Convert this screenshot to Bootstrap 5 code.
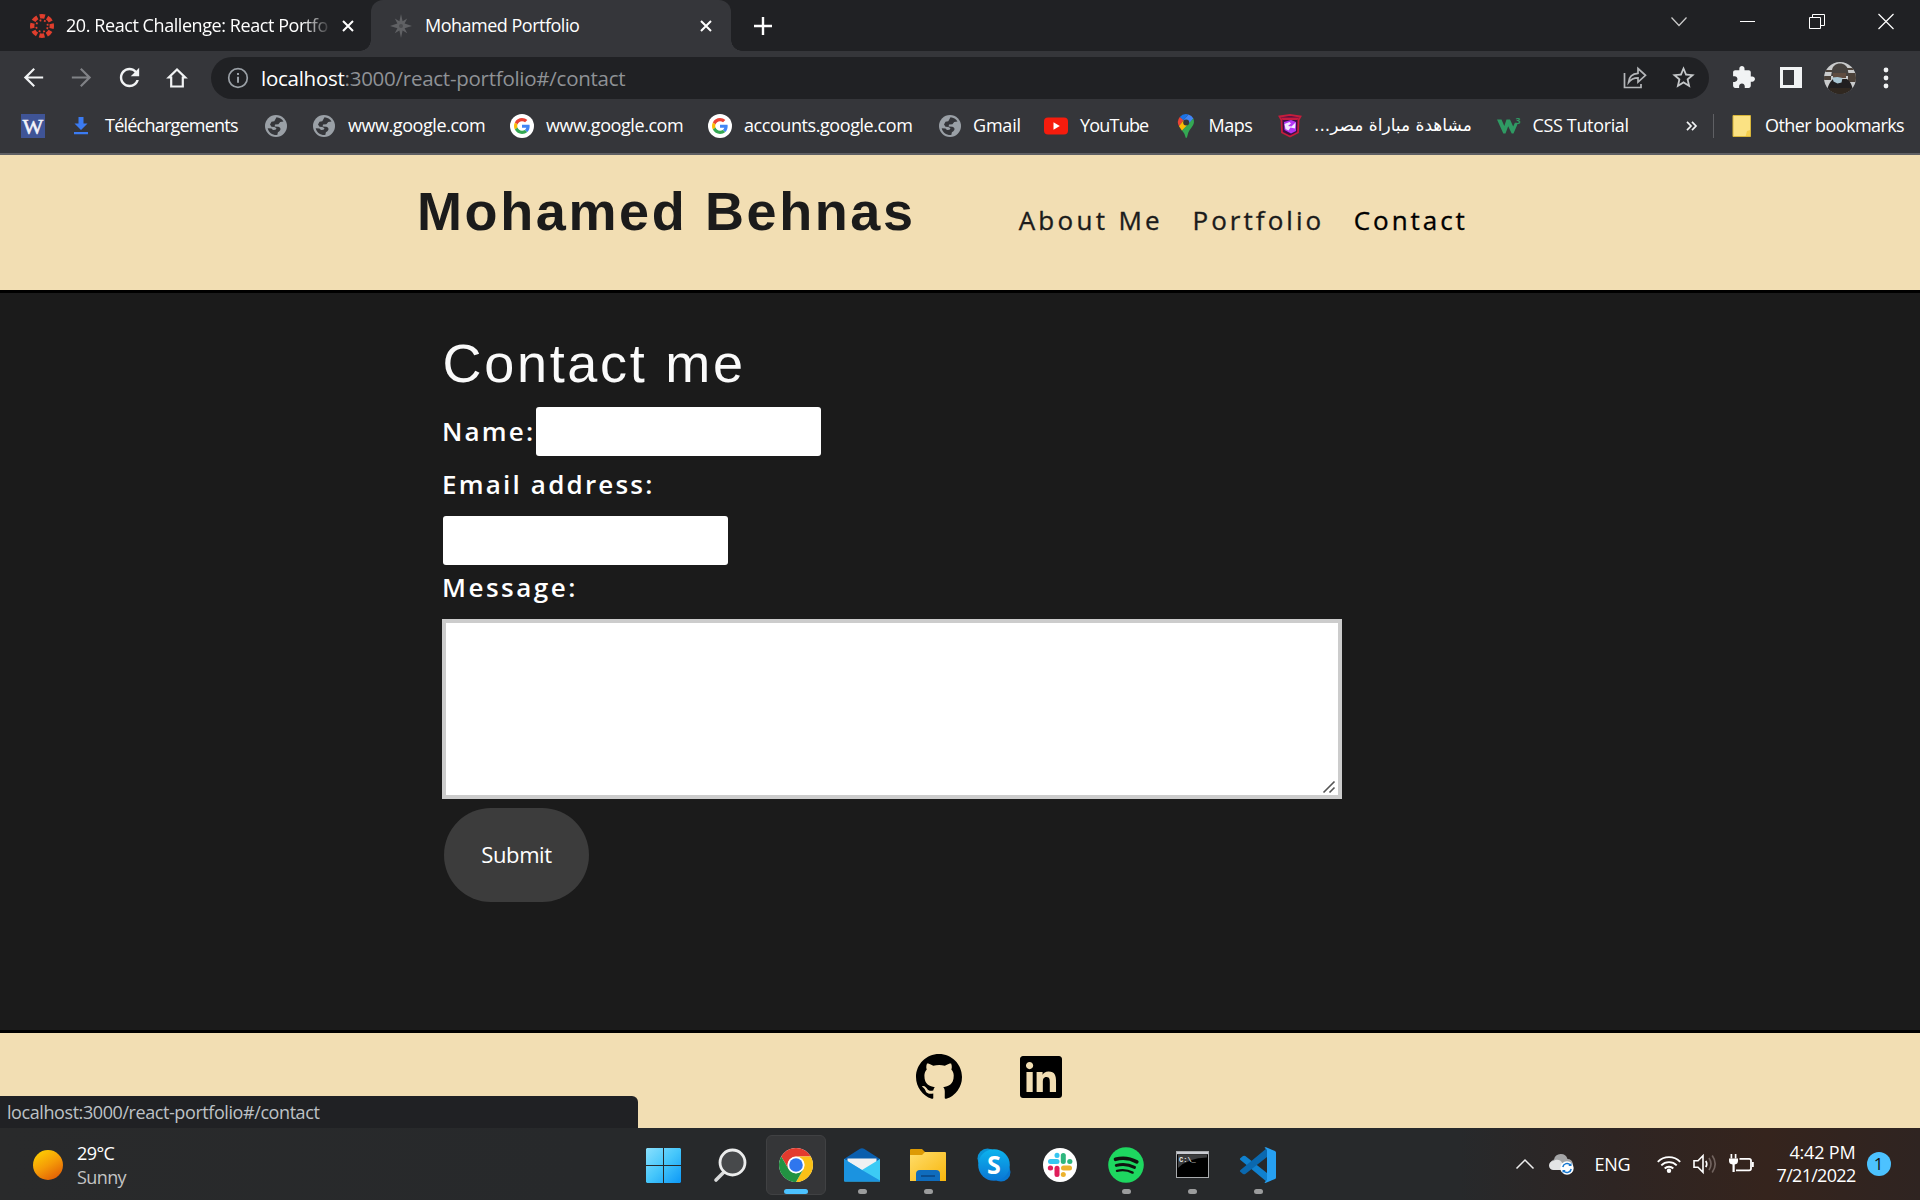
<!DOCTYPE html>
<html lang="en">
<head>
<meta charset="utf-8">
<title>Mohamed Portfolio</title>
<link href="https://cdn.jsdelivr.net/npm/bootstrap@5.3.0/dist/css/bootstrap.min.css" rel="stylesheet">
<script src="https://cdn.jsdelivr.net/npm/bootstrap@5.3.0/dist/js/bootstrap.bundle.min.js"></script>
<style>
body{font-family:"Open Sans","Noto Sans",sans-serif;font-size:18px;line-height:24px;width:1920px;height:1200px;overflow:hidden;background:#1b1b1b;color:#fff}
svg{display:block;flex:none;overflow:visible}
.slot{flex:none;display:flex;align-items:center;justify-content:center;width:48px;height:100%}
.nowrap{white-space:nowrap}
/* tab strip */
.tab-strip{height:51px;background:#202124}
.tab-idle{width:371px;padding:0 10px 0 30px}
.tab-live{width:360px;background:#35363a;border-radius:12px 12px 0 0;padding:0 12px 0 18px}
.tab-live::before,.tab-live::after{content:"";position:absolute;bottom:0;width:11px;height:11px}
.tab-live::before{left:-11px;background:radial-gradient(circle at 0 0,transparent 10.5px,#35363a 11px)}
.tab-live::after{right:-11px;background:radial-gradient(circle at 100% 0,transparent 10.5px,#35363a 11px)}
.tab-title-a{width:263px;margin-left:12px;padding-bottom:2px;letter-spacing:-.43px;overflow:hidden;-webkit-mask-image:linear-gradient(90deg,#000 236px,transparent 266px)}
.tab-title-b{margin-left:12px;padding-bottom:2px;letter-spacing:-.5px}
.tab-x{margin-right:7px}
.new-tab{width:64px}
.win-btn{width:69px;height:43px}
/* toolbar */
.tool-bar{height:53px;background:#35363a;padding-left:9px}
.omni{width:1498px;height:42px;margin:0 10px;border-radius:21px;background:#202124;padding:0 2px 0 16px;font-size:20.5px;letter-spacing:-.26px;color:#8f9296}
.omni b{font-weight:400;color:#fff;margin-left:12px}
.face{width:48px;margin-left:1px}
.dots{width:44px}
/* bookmarks */
.marks{height:51px;background:#35363a;border-bottom:2px solid #5f6064;padding:0 0 5px 21px}
.bm{display:flex;align-items:center;gap:12px;flex:none;height:100%;white-space:nowrap}
.bm span{padding-bottom:1.5px}
.bm-s{width:48px}.bm-dl{width:195px;letter-spacing:-.77px}.bm-g{width:198px;letter-spacing:-.43px}
.bm-acc{width:230px;letter-spacing:-.43px}.bm-gm{width:106px;letter-spacing:-.2px}.bm-gm span{margin-left:-1px}.bm-yt{width:129.5px;letter-spacing:-.8px}
.bm-map{width:104.5px;letter-spacing:-.45px}.bm-map span{margin-left:-1px}.bm-ar{width:218.5px}.bm-ar span{font-family:"DejaVu Sans",sans-serif;font-size:17px}
.bm-css{width:189.5px;letter-spacing:-.35px}.bm-other{letter-spacing:-.58px;margin-left:18px}
.bm-line{width:1px;height:24px;background:#5f6064;margin-left:16px}
/* page */
.site-head{height:138px;background:#f2deb3;border-bottom:3px solid #000;color:#1b1b1b;padding:23.5px 0 0 417px}
.site-title{font:700 54px/64px "Liberation Sans",Arial,sans-serif;letter-spacing:2.61px;margin:0 103px 0 0}
.site-nav{gap:29.5px;font-size:26px;letter-spacing:3.05px;-webkit-text-stroke:.35px currentColor}
.site-nav a{color:#1b1b1b;text-decoration:none}.site-nav a:first-child{letter-spacing:3.3px}.site-nav a.on{color:#000;letter-spacing:2.95px}
.site-main{height:737px;background:#1b1b1b;padding:38px 0 0 442px}
.big-h{font:400 54px/64px "Liberation Sans",Arial,sans-serif;letter-spacing:2.7px;margin:0 0 12px;padding-left:.5px;color:#fafafa}
.f-label{font-size:26px;line-height:38px;font-weight:600;letter-spacing:2.5px;margin:0;display:block}
.f-name{width:94px;padding-bottom:2px;letter-spacing:2.2px}.f-mail{letter-spacing:2.2px;margin-top:9px;margin-bottom:13px}.f-msg{margin-top:3px;margin-bottom:13px}
.f-in{display:block;width:285px;height:49px;border:0;border-radius:3px;background:#fff;padding:0 8px}
.f-mail-in{margin-left:1px}
.f-area{display:block;width:900px;height:180px;border:4px solid #ccc;border-radius:0;background:#fff;resize:none;margin:0}
.f-box{width:900px}.f-grip{right:7px;bottom:6px}
.f-send{display:block;width:145px;height:94px;border:0;border-radius:47px;background:#3c3c3c;color:#fff;font-size:22px;letter-spacing:-.38px;margin:9px 0 0 2px;padding:0 0 2px}
.site-foot{height:98px;background:#f2deb3;border-top:3px solid #000;padding:21px 0 0 916px;gap:58px}
.in-logo{margin-top:2px}
.status-tip{left:0;bottom:72px;width:638px;height:32px;background:#202124;border-radius:0 6px 0 0;color:#bdc1c6;padding:4px 0 0 7px;letter-spacing:-.42px}
/* taskbar */
.task-bar{height:72px;background:linear-gradient(90deg,#292a2b 0,#27292b 30%,#27292b 76%,#2e2523 84%,#35241d 92%,#2f2421 100%)}
.weather{width:630px;padding:2px 0 0 33px;letter-spacing:-.6px;gap:14px}
.sky{color:#c3c4c4}
.app{width:66px;height:72px;flex:none;display:flex;align-items:center;justify-content:center;position:relative;padding-top:2px}
.app-on,.app-on~.app{left:0}
.app-win{width:66.5px}
.app-on::before{content:"";position:absolute;left:3px;top:7px;width:60px;height:60px;border-radius:6px;background:#353638;border:1px solid #404143}
.app-on svg{position:relative}
.run::after,.app-on::after{content:"";position:absolute;bottom:6px;left:28.5px;width:9px;height:5px;border-radius:3px;background:#9b9c9d}
.app-on::after{left:21px;width:24px;background:#4cc2ff}
.tray{margin-left:224.500px}
.cloud{margin-left:15px}
.lang{margin-left:21px;width:62px;letter-spacing:-.28px}
.sys{margin-left:12px}
.clock{width:102px;text-align:right;line-height:23.5px}
.clock .hr-row{letter-spacing:-.18px}.clock .dt-row{letter-spacing:-.7px}
.note{width:24px;height:24px;border-radius:50%;background:#4cc2ff;color:#111;text-align:center;font-size:17px;line-height:24px;margin-left:11px}
</style>
</head>
<body class="d-flex flex-column">
<svg width="0" height="0" class="position-absolute">
<defs>
<symbol id="globe" viewBox="0 0 24 24"><circle cx="12" cy="12" r="11" fill="#9aa0a6"/><path d="M12.500 3.200c3 .3 5.500 1.800 7 4.300l-3.300.6-1.800 2.200-3.400.2-.4 2 3.600.3c2.600.5 3 3 1.200 4.400l-1.500 1-.6 2.800c-4.700.4-8.700-2.500-9.600-6.800l3.800.4 1.500 1.400 2.500-.2 1-1.600-2-1.200-3-.2-1.500-2.300L7.500 7.800l2.800-.6z" fill="#35363a"/></symbol>
<symbol id="goog" viewBox="-12 -12 72 72"><circle cx="24" cy="24" r="36" fill="#fff"/><path fill="#ea4335" d="M24 9.500c3.540 0 6.710 1.220 9.210 3.600l6.850-6.850C35.900 2.380 30.470 0 24 0 14.620 0 6.510 5.380 2.560 13.220l7.980 6.190C12.430 13.720 17.740 9.500 24 9.500z"/><path fill="#4285f4" d="M46.980 24.550c0-1.570-.15-3.090-.38-4.550H24v9.020h12.940c-.58 2.960-2.260 5.480-4.780 7.180l7.730 6c4.510-4.180 7.090-10.360 7.090-17.650z"/><path fill="#fbbc05" d="M10.530 28.590c-.48-1.450-.76-2.990-.76-4.590s.27-3.140.76-4.590l-7.980-6.190C.92 16.460 0 20.120 0 24c0 3.880.92 7.540 2.560 10.780l7.970-6.190z"/><path fill="#34a853" d="M24 48c6.480 0 11.930-2.130 15.890-5.810l-7.730-6c-2.150 1.450-4.920 2.300-8.160 2.300-6.260 0-11.570-4.220-13.470-9.910l-7.980 6.190C6.510 42.620 14.620 48 24 48z"/></symbol>
<symbol id="shut" viewBox="0 0 12 12"><path d="M1 1l10 10M11 1L1 11" stroke="#fff" stroke-width="2" fill="none"/></symbol>
</defs>
</svg>

<div class="tab-strip d-flex align-items-stretch">
  <div class="tab-idle d-flex align-items-center">
    <svg width="24" height="24" viewBox="0 0 24 24"><g fill="none" stroke="#e03e2d"><circle cx="12" cy="12" r="9.800" stroke-width="4.400" stroke-dasharray="5.200 2.497" stroke-dashoffset="2.600"/><circle cx="12" cy="12" r="5.800" stroke-width="1.800" stroke-dasharray="1.800 2.755" stroke-dashoffset="3.200"/></g></svg>
    <span class="tab-title-a nowrap">20. React Challenge: React Portfolio</span>
    <svg class="tab-x ms-auto" width="12" height="12"><use href="#shut"/></svg>
  </div>
  <div class="tab-live position-relative d-flex align-items-center">
    <svg width="24" height="24" viewBox="0 0 24 24"><path d="M12 0l1.600 7.200 4.600-2.600-2.600 4.900L23 12l-7.400 2.300 2.600 5-4.600-2.800L12 24l-1.600-7.500-4.600 2.800 2.600-5L1 12l7.400-2.500-2.600-4.900 4.600 2.600z" fill="#606164"/><circle cx="12" cy="12" r="2" fill="#4a4b4e"/></svg>
    <span class="tab-title-b nowrap">Mohamed Portfolio</span>
    <svg class="tab-x ms-auto" width="12" height="12"><use href="#shut"/></svg>
  </div>
  <div class="slot new-tab"><svg width="18" height="18" viewBox="0 0 18 18"><path d="M9 0v18M0 9h18" stroke="#fff" stroke-width="2.400"/></svg></div>
  <div class="d-flex ms-auto align-items-start">
    <div class="slot win-btn"><svg width="16" height="9" viewBox="0 0 16 9"><path d="M.5.500L8 8.500 15.500.5" stroke="#ccc" stroke-width="1.200" fill="none"/></svg></div>
    <div class="slot win-btn"><svg width="15" height="1"><rect width="15" height="1" fill="#fff"/></svg></div>
    <div class="slot win-btn"><svg width="16" height="15" viewBox="0 0 16 15"><path d="M.5 3.500h11v11H.5zM3.500 3.500v-3h12v11h-3.500" stroke="#fff" fill="none"/></svg></div>
    <div class="slot win-btn"><svg width="16" height="15" viewBox="0 0 16 15"><path d="M.5 0l15 15M15.500 0l-15 15" stroke="#fff" stroke-width="1.200"/></svg></div>
  </div>
</div>

<div class="tool-bar d-flex align-items-center">
  <div class="slot"><svg width="29" height="29" viewBox="0 0 24 24"><path fill="#f1f3f4" d="M20 11.100H7.500l5.700-5.700L12 4.200l-8 7.800 8 7.800 1.200-1.200-5.700-5.700H20z"/></svg></div>
  <div class="slot"><svg width="29" height="29" viewBox="0 0 24 24"><path fill="#808286" d="M4 11.100h12.500l-5.700-5.700L12 4.200l8 7.800-8 7.800-1.200-1.200 5.700-5.700H4z"/></svg></div>
  <div class="slot"><svg width="29" height="29" viewBox="0 0 24 24"><path fill="#f1f3f4" d="M17.650 6.350C16.200 4.900 14.210 4 12 4c-4.420 0-7.990 3.580-7.990 8s3.570 8 7.990 8c3.730 0 6.840-2.550 7.730-6h-2.080c-.82 2.330-3.040 4-5.650 4-3.310 0-6-2.690-6-6s2.690-6 6-6c1.660 0 3.140.69 4.220 1.780L13 11h7V4l-2.350 2.350z"/></svg></div>
  <div class="slot"><svg width="20" height="20" viewBox="0 0 20 20"><path d="M4.200 18.500V9.500H1.800L10 1.500l8.200 8h-2.400v9z" fill="none" stroke="#f1f3f4" stroke-width="2.200"/></svg></div>
  <div class="omni d-flex align-items-center">
    <svg width="22" height="22" viewBox="0 0 22 22"><circle cx="11" cy="11" r="9.300" fill="none" stroke="#9aa0a6" stroke-width="1.700"/><path d="M11 9.800v6M11 6v2" stroke="#9aa0a6" stroke-width="2"/></svg>
    <span class="nowrap"><b>localhost</b>:3000/react-portfolio#/contact</span>
    <div class="slot ms-auto"><svg width="24" height="24" viewBox="0 0 24 24" fill="none" stroke="#b4b6b9" stroke-width="1.700"><path d="M1.500 7v14.500H18V18"/><path d="M5.500 16.500c.5-5.500 3.500-9 9.500-9.200V2.500l7.500 6.800-7.500 6.800V11.800c-4 0-7 1.200-9.500 4.700z"/></svg></div>
    <div class="slot"><svg width="27" height="27" viewBox="0 0 24 24"><path fill="#c4c7c9" d="M22 9.240l-7.190-.62L12 2 9.190 8.630 2 9.240l5.460 4.730L5.820 21 12 17.270 18.180 21l-1.630-7.030L22 9.240zM12 15.400l-3.760 2.270 1-4.280-3.320-2.880 4.380-.38L12 6.100l1.710 4.040 4.380.38-3.320 2.880 1 4.280L12 15.400z"/></svg></div>
  </div>
  <div class="slot"><svg width="25" height="25" viewBox="0 0 24 24"><path fill="#f1f3f4" d="M20.500 11H19V7c0-1.100-.9-2-2-2h-4V3.500C13 2.120 11.880 1 10.500 1S8 2.120 8 3.500V5H4c-1.100 0-1.990.9-1.990 2v3.800H3.500c1.490 0 2.700 1.210 2.700 2.700s-1.210 2.700-2.700 2.700H2V20c0 1.100.9 2 2 2h3.800v-1.500c0-1.490 1.210-2.700 2.700-2.700 1.490 0 2.700 1.210 2.700 2.700V22H17c1.100 0 2-.9 2-2v-4h1.500c1.380 0 2.500-1.120 2.500-2.500S21.880 11 20.500 11z"/></svg></div>
  <div class="slot"><svg width="22" height="21" viewBox="0 0 22 21"><path fill="#f1f3f4" fill-rule="evenodd" d="M0 0h22v21H0zM3 3v15h11V3z"/></svg></div>
  <div class="slot face"><svg width="32" height="32" viewBox="0 0 32 32"><clipPath id="fc"><circle cx="16" cy="16" r="16"/></clipPath><g clip-path="url(#fc)"><path fill="#c9cbcc" d="M0 0h32v32H0z"/><path fill="#4b4139" d="M0 8h9v2H0zM22 6h10v2H22zM24 11h8v9h-8zM0 14h7v4H0z"/><path fill="#46423f" d="M8 9c0-10 16-10 16 0l1 5H7z"/><path fill="#5f4c40" d="M9 11h13v5H9z"/><path fill="#211f20" d="M3 32c0-8 3-12 6-15h14c4 3 6 8 6 15z"/><path fill="#a9c6d3" d="M8.500 15.500l5-.5 5 1-1 4.500-4 1-4-2z"/><path fill="#302820" d="M6 26h20v6H6z"/></g></svg></div>
  <div class="slot dots"><svg width="6" height="26" viewBox="0 0 6 26" fill="#f1f3f4"><circle cx="3" cy="5" r="2.400"/><circle cx="3" cy="13" r="2.400"/><circle cx="3" cy="21" r="2.400"/></svg></div>
</div>

<div class="marks d-flex align-items-center">
  <div class="bm bm-s"><svg width="24" height="24" viewBox="0 0 24 24"><path fill="#3f5496" d="M0 0h24v24H0z"/><text x="12" y="19.500" text-anchor="middle" font-family="Liberation Serif,serif" font-size="22" fill="#f3f4fa" stroke="#f3f4fa" stroke-width=".5">W</text></svg></div>
  <div class="bm bm-dl"><svg width="24" height="24" viewBox="0 0 24 24"><path fill="#3b7bf2" d="M9.500 3h5v6.500h4L12 16 5.500 9.500h4zM5 18h14v2.200H5z"/></svg><span>Téléchargements</span></div>
  <div class="bm bm-s"><svg width="24" height="24"><use href="#globe"/></svg></div>
  <div class="bm bm-g"><svg width="24" height="24"><use href="#globe"/></svg><span>www.google.com</span></div>
  <div class="bm bm-g"><svg width="24" height="24"><use href="#goog"/></svg><span>www.google.com</span></div>
  <div class="bm bm-acc"><svg width="24" height="24"><use href="#goog"/></svg><span>accounts.google.com</span></div>
  <div class="bm bm-gm"><svg width="24" height="24"><use href="#globe"/></svg><span>Gmail</span></div>
  <div class="bm bm-yt"><svg width="24" height="24" viewBox="0 0 24 24"><rect y="3.500" width="24" height="17" rx="4" fill="#f61c0d"/><path d="M9.500 8.300v7.400l6.300-3.700z" fill="#fff"/></svg><span>YouTube</span></div>
  <div class="bm bm-map"><svg width="24" height="24" viewBox="0 0 24 24"><path d="M5.800 3A8.300 8.300 0 0 1 14.500.500L9 6.500z" fill="#1a73e8"/><path d="M14.500.400A8.300 8.300 0 0 1 19.400 4.600L14.500 10.500 9.200 6.400z" fill="#4285f4"/><path d="M5.800 3L9.400 6.200 5.200 12.500A8.300 8.300 0 0 1 5.800 3z" fill="#ea4335"/><path d="M14.900 10.300L8 16.800 5 12.200l4.400-5.800z" fill="#fbbc04"/><path d="M19.400 4.500c2.200 6.500-2.400 8.500-4.800 13.500-.9 2-1.300 6-2.300 6s-1.200-3.600-2.600-5.300L8 16.500z" fill="#34a853"/><circle cx="12.200" cy="8.500" r="3" fill="#35363a"/></svg><span>Maps</span></div>
  <div class="bm bm-ar"><svg width="24" height="24" viewBox="0 0 24 24"><path d="M1.500 2.500L12 1l10.500 1.500L20.500 6l-.5 12.500-8 4-8-4L3.500 6z" fill="#3a1045" stroke="#c51d3c" stroke-width="1.800"/><path d="M3 3.500h18l-1.500 2.500h-15z" fill="#c61b3f"/><path d="M6 8l7-2 5 2v9l-5 2.500L6.500 16z" fill="#b436f5"/><path d="M6.500 10l5-2 1.500 1.500-3 2.500 3.500.5 4-4-.5 6-4.500-1-2 3-3-1.500z" fill="#f3e9ff"/></svg><span dir="rtl">مشاهدة مباراة مصر...</span></div>
  <div class="bm bm-css"><svg width="24" height="24" viewBox="0 0 24 24"><path d="M0 5.500h4.500l2.800 6.500 2.200-6.500H13l3.200 7L18 8.500l2.500 1.800L16.500 19.500h-1.800L11.200 12.300 8.500 19.500H6.300z" fill="#2f9a63"/><text x="18.500" y="10" font-family="Open Sans,sans-serif" font-weight="700" font-size="9" fill="#2f9a63">3</text></svg><span>CSS Tutorial</span></div>
  <svg width="11" height="10" viewBox="0 0 11 10"><path d="M1 .8L5 5 1 9.200M6 .8L10 5 6 9.200" stroke="#f1f3f4" stroke-width="1.700" fill="none"/></svg>
  <div class="bm-line"></div>
  <div class="bm bm-other"><svg width="21" height="22" viewBox="0 0 21 22"><path d="M1 1h17v15.500l-3.500 4.500H1z" fill="#fbe283"/><path d="M18.500 15v6.500h-5l1.500-5.500z" fill="#f5cf4e"/><path d="M1 .5h17.500v15.500M1 .5v21h17.500v-6" fill="none" stroke="#d8b63a"/></svg><span>Other bookmarks</span></div>
</div>

<header class="site-head d-flex align-items-baseline">
  <h1 class="site-title nowrap">Mohamed Behnas</h1>
  <nav class="site-nav d-flex nowrap"><a href="#about">About Me</a><a href="#portfolio">Portfolio</a><a href="#contact" class="on">Contact</a></nav>
</header>

<main class="site-main">
  <h2 class="big-h">Contact me</h2>
  <form>
    <div class="d-flex align-items-center"><label class="f-label f-name" for="n">Name:</label><input class="f-in" id="n" type="text"></div>
    <label class="f-label f-mail" for="e">Email address:</label>
    <input class="f-in f-mail-in" id="e" type="email">
    <label class="f-label f-msg" for="m">Message:</label>
    <div class="f-box position-relative"><textarea class="f-area" id="m"></textarea><svg class="f-grip position-absolute" width="12" height="12" viewBox="0 0 12 12"><path d="M.5 11.500l11-11M6.500 11.500l5-5" stroke="#555" stroke-width="1.600"/></svg></div>
    <button class="f-send" type="button">Submit</button>
  </form>
</main>

<footer class="site-foot d-flex align-items-start">
  <svg width="46" height="46" viewBox="0 0 16 16"><path d="M8 0C3.580 0 0 3.580 0 8c0 3.540 2.290 6.530 5.470 7.590.4.07.55-.17.55-.38 0-.19-.01-.82-.01-1.490-2.010.37-2.530-.49-2.690-.94-.09-.23-.48-.94-.82-1.130-.28-.15-.68-.52-.01-.53.63-.01 1.080.58 1.230.82.72 1.210 1.870.87 2.330.66.07-.52.28-.87.51-1.070-1.780-.2-3.640-.89-3.640-3.950 0-.87.31-1.590.82-2.150-.08-.2-.36-1.020.08-2.120 0 0 .67-.21 2.200.82.64-.18 1.320-.27 2-.27.68 0 1.360.09 2 .27 1.530-1.040 2.200-.82 2.200-.82.44 1.100.16 1.920.08 2.120.51.56.82 1.270.82 2.150 0 3.070-1.870 3.750-3.650 3.950.29.25.54.73.54 1.480 0 1.070-.01 1.930-.01 2.200 0 .21.15.46.55.38A8.012 8.012 0 0 0 16 8c0-4.420-3.580-8-8-8z"/></svg>
  <svg class="in-logo" width="42" height="42" viewBox="0 32 448 448"><path d="M416 32H31.900C14.300 32 0 46.500 0 64.300v383.400C0 465.500 14.300 480 31.900 480H416c17.600 0 32-14.500 32-32.300V64.300c0-17.800-14.400-32.300-32-32.300zM135.400 416H69V202.200h66.500V416zm-33.200-243c-21.300 0-38.500-17.300-38.500-38.500S80.900 96 102.200 96c21.200 0 38.500 17.300 38.500 38.500 0 21.300-17.200 38.500-38.500 38.500zm282.100 243h-66.400V312c0-24.800-.5-56.700-34.500-56.700-34.600 0-39.900 27-39.900 54.900V416h-66.400V202.200h63.700v29.200h.9c8.900-16.800 30.600-34.500 62.900-34.500 67.200 0 79.700 44.300 79.700 101.900V416z"/></svg>
</footer>

<div class="status-tip position-absolute nowrap">localhost:3000/react-portfolio#/contact</div>

<div class="task-bar d-flex align-items-stretch">
  <div class="weather d-flex align-items-center">
    <svg width="30" height="30" viewBox="0 0 30 30"><linearGradient id="sun" x1=".2" y1="0" x2=".8" y2="1"><stop offset="0" stop-color="#fdcf02"/><stop offset=".5" stop-color="#f59b07"/><stop offset="1" stop-color="#e05a05"/></linearGradient><circle cx="15" cy="15" r="15" fill="url(#sun)"/></svg>
    <div><div>29°C</div><div class="sky">Sunny</div></div>
  </div>
  <div class="app app-win"><svg width="35" height="35" viewBox="0 0 35 35"><linearGradient id="wn" x1="0" y1="0" x2="1" y2="1"><stop offset="0" stop-color="#8ae0fd"/><stop offset=".5" stop-color="#45c6fb"/><stop offset="1" stop-color="#0c98f7"/></linearGradient><path fill="url(#wn)" d="M1 0h16v17H0V1zM18 0h16l1 1v16H18zM0 18h17v17H1l-1-1zM18 18h17v16l-1 1H18z"/></svg></div>
  <div class="app app-win"><svg width="34" height="34" viewBox="0 0 34 34"><path d="M3 32l9-9" stroke="#d9dadb" stroke-width="3.600" stroke-linecap="round"/><circle cx="19.500" cy="14.500" r="12.500" fill="#47494b" stroke="#eceded" stroke-width="2.800"/></svg></div>
  <div class="app app-on"><svg width="34" height="34" viewBox="0 0 34 34"><circle cx="17" cy="17" r="17" fill="#fff"/><path d="M2.280 8.500A17 17 0 0 1 31.720 8.500H17A8.500 8.500 0 0 0 9.640 21.250z" fill="#e33b2e"/><path d="M31.720 8.500A17 17 0 0 1 17 34L24.360 21.250A8.500 8.500 0 0 0 17 8.500z" fill="#fbc116"/><path d="M17 34A17 17 0 0 1 2.280 8.500L9.640 21.250A8.500 8.500 0 0 0 24.360 21.250z" fill="#229342"/><circle cx="17" cy="17" r="8.300" fill="#fff"/><circle cx="17" cy="17" r="6.800" fill="#2f76ee"/></svg></div>
  <div class="app run"><svg width="36" height="34" viewBox="0 0 36 34"><path d="M0 11L16 .8q2-1.300 4 0L36 11v6H0z" fill="#0a5ead"/><path d="M3.500 10.500h29V18L18 26 3.500 18z" fill="#f1f1f2"/><path d="M0 11v21.500q0 1 1 1h35V11L18 22z" fill="#3ccbf5"/><path d="M0 11l18 11 18 10.500v1H1q-1 0-1-1z" fill="#1b93e0"/></svg></div>
  <div class="app run"><svg width="36" height="34" viewBox="0 0 36 34"><linearGradient id="fo" x1="0" y1="0" x2="1" y2="1"><stop offset="0" stop-color="#ffdd6b"/><stop offset="1" stop-color="#f8b60c"/></linearGradient><path d="M0 8V2q0-1 1-1h11l3 3v4z" fill="#dd9a04"/><path d="M0 7h12l3-3h20q1 0 1 1v28H0z" fill="url(#fo)"/><path d="M6 33v-7q0-4 4-4h16q4 0 4 4v7z" fill="#0f6cbd"/><path d="M11 28h14" stroke="#0b4884" stroke-width="1.600"/></svg></div>
  <div class="app"><svg width="34" height="34" viewBox="0 0 34 34"><linearGradient id="sk" x1="0" y1="0" x2="0" y2="1"><stop offset="0" stop-color="#0cb4ee"/><stop offset="1" stop-color="#0a76d4"/></linearGradient><circle cx="10.500" cy="10.500" r="10" fill="#0993d6"/><circle cx="24" cy="24" r="9.500" fill="#0878d2"/><circle cx="17" cy="17" r="15.800" fill="url(#sk)"/><text x="17" y="26" text-anchor="middle" font-family="Open Sans,sans-serif" font-weight="700" font-size="25" fill="#fff">S</text></svg></div>
  <div class="app"><svg width="34" height="34" viewBox="0 0 34 34"><circle cx="17" cy="17" r="17" fill="#fff"/><g stroke-width="5" stroke-linecap="round"><path d="M14 7.200v.300" stroke="#36c5f0"/><path d="M7.500 13.500h6.500" stroke="#36c5f0"/><path d="M20.300 7.500v6" stroke="#2eb67d"/><path d="M26.700 13.500h.2" stroke="#2eb67d"/><path d="M20.500 20h6" stroke="#ecb22e"/><path d="M20.300 26.400v.2" stroke="#ecb22e"/><path d="M14 20.300v6.300" stroke="#e01e5a"/><path d="M7.300 20h.300" stroke="#e01e5a"/></g></svg></div>
  <div class="app run"><svg width="36" height="36" viewBox="0 0 36 36"><circle cx="18" cy="18" r="17.800" fill="#1ed760"/><g fill="none" stroke="#10130f" stroke-linecap="round"><path d="M7.500 12.300q11-3 21.300 2.600" stroke-width="3.600"/><path d="M8.300 18.400q9.500-2.700 18.200 2" stroke-width="3"/><path d="M9 23.800q8.500-2 15.600 1.800" stroke-width="2.400"/></g></svg></div>
  <div class="app run"><svg width="33" height="28" viewBox="0 0 33 28"><rect x=".5" y=".5" width="32" height="26" fill="#000" stroke="#a9abae"/><path d="M1 1h31v2.200H1z" fill="#c9cbd2"/><path d="M2 3.500h29v3Q12 7 2 17z" fill="#3c3d3f"/><text x="3" y="10.500" font-family="Liberation Mono,monospace" font-size="7" font-weight="700" fill="#eee">C:\_</text></svg></div>
  <div class="app run"><svg width="36" height="36" viewBox="0 0 36 36"><path d="M0 11.500l3-2.500q1.200-.6 2.300 0L27 26v9L.5 13q-1-.7-.5-1.500z" fill="#1081cf"/><path d="M0 24.500l3 2.500q1.200.6 2.300 0L27 10V1L.5 23q-1 .7-.5 1.500z" fill="#0a68af"/><path d="M26 .2l9 3.800q1 .5 1 1.500v25q0 1-1 1.500l-9 3.800q-1 .3-1.500-.5l2.500-2V2.800l-2.500-2q.5-.9 1.500-.6z" fill="#26a0f2"/></svg></div>
  <div class="tray d-flex align-items-center nowrap">
    <svg width="18" height="10" viewBox="0 0 18 10"><path d="M.5 9.500L9 1l8.500 8.500" stroke="#eee" stroke-width="1.500" fill="none"/></svg>
    <svg class="cloud" width="25" height="21" viewBox="0 0 25 21"><path d="M5 15a5 5 0 0 1 0-9.500A7 7 0 0 1 18.500 5 5 5 0 0 1 19 15z" fill="#a4a5a6"/><path d="M4.500 16a4.500 4.500 0 0 1 0-9 5.500 5.500 0 0 1 9 3l4 6z" fill="#e3e4e5"/><circle cx="18" cy="14" r="6.700" fill="#fff"/><path d="M13.800 13a4.300 4.300 0 0 1 7.500-2M22.200 15a4.300 4.300 0 0 1-7.500 2" stroke="#1576cf" stroke-width="1.500" fill="none"/><path d="M22.500 8.800v3.200h-3.200zM13.500 19.200V16h3.200z" fill="#1576cf"/></svg>
    <span class="lang">ENG</span>
    <svg width="24" height="18" viewBox="0 0 24 18"><g fill="none" stroke="#fff" stroke-width="1.900"><path d="M.8 6.800a15.800 15.800 0 0 1 22.400 0"/><path d="M4.300 10.300a10.900 10.900 0 0 1 15.400 0"/><path d="M7.700 13.500a6 6 0 0 1 8.600 0"/></g><circle cx="12" cy="15.800" r="2.200" fill="#fff"/></svg>
    <svg class="sys" width="24" height="20" viewBox="0 0 24 20" fill="none"><path d="M1 6.800h4l5-5v16.400l-5-5H1z" stroke="#fff" stroke-width="1.600"/><path d="M12.800 6.800q2 3.200 0 6.400" stroke="#fff" stroke-width="1.600"/><path d="M16 4q4 6 0 12M19.200 1.500q6 8.500 0 17" stroke="#71635e" stroke-width="1.700"/></svg>
    <svg class="sys" width="25" height="20" viewBox="0 0 25 20" fill="none"><path d="M10.500 4.800h9.700q1.800 0 1.800 1.800v8q0 1.800-1.800 1.800H7" stroke="#fff" stroke-width="1.800"/><path d="M23 8h1.800v5H23zM0 4.500h9V7q0 3-3.300 3.500V18H3.500v-7.500Q0 10 0 7z" fill="#fff"/><path d="M2.400 0v4.500M6.600 0v4.500" stroke="#fff" stroke-width="1.700"/></svg>
    <div class="clock"><div class="hr-row">4:42 PM</div><div class="dt-row">7/21/2022</div></div>
    <div class="note">1</div>
  </div>
</div>
</body>
</html>
